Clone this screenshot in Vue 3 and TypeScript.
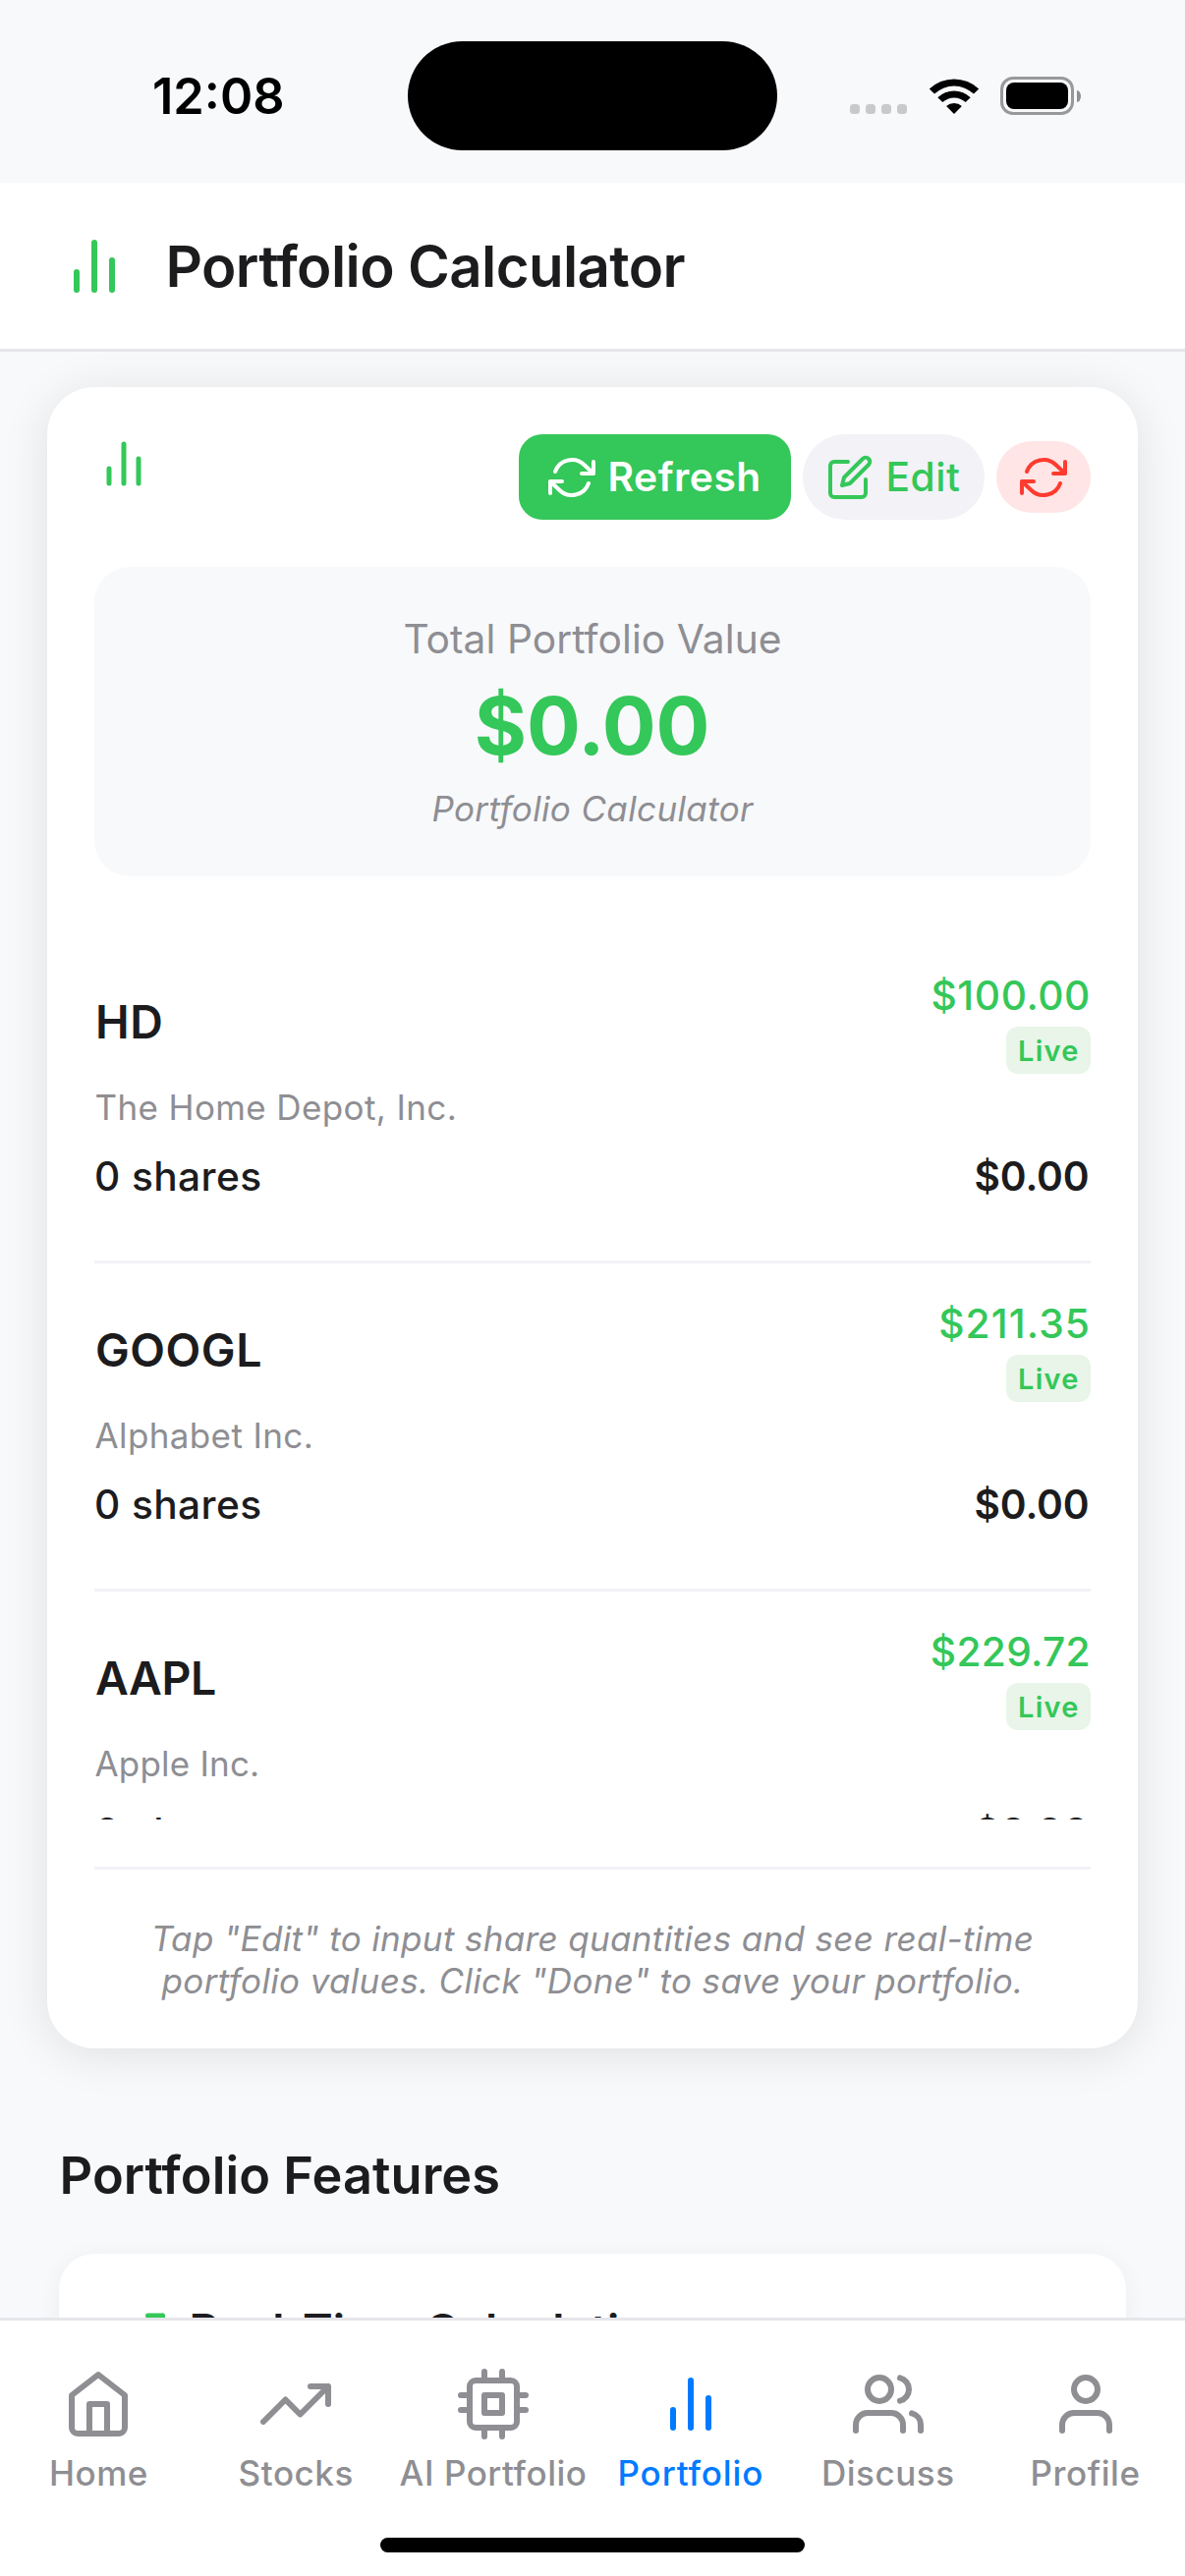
<script setup lang="ts">
interface Stock {
  symbol: string
  name: string
  price: string
  shares: number
  value: string
}

interface Tab {
  label: string
  paths: string[]
  active?: boolean
}

const stocks: Stock[] = [
  { symbol: 'HD', name: 'The Home Depot, Inc.', price: '$100.00', shares: 0, value: '$0.00' },
  { symbol: 'GOOGL', name: 'Alphabet Inc.', price: '$211.35', shares: 0, value: '$0.00' },
  { symbol: 'AAPL', name: 'Apple Inc.', price: '$229.72', shares: 0, value: '$0.00' },
]

const bars = 'M18 20V10M12 20V4M6 20v-6'
const trending = 'M23 6l-9.5 9.5-5-5L1 18M17 6h6v6'
const refresh =
  'M23 4v6h-6M1 20v-6h6M3.51 9a9 9 0 0 1 14.85-3.36L23 10M1 14l4.64 4.36A9 9 0 0 0 20.49 15'

const tabs: Tab[] = [
  { label: 'Home', paths: ['M3 9l9-7 9 7v11a2 2 0 0 1-2 2H5a2 2 0 0 1-2-2z', 'M9 22V12h6v10'] },
  { label: 'Stocks', paths: [trending] },
  {
    label: 'AI Portfolio',
    paths: [
      'M6 4h12a2 2 0 0 1 2 2v12a2 2 0 0 1-2 2H6a2 2 0 0 1-2-2V6a2 2 0 0 1 2-2z',
      'M9 9h6v6H9z',
      'M9 1v3M15 1v3M9 20v3M15 20v3M20 9h3M20 14h3M1 9h3M1 14h3',
    ],
  },
  { label: 'Portfolio', paths: [bars], active: true },
  {
    label: 'Discuss',
    paths: [
      'M17 21v-2a4 4 0 0 0-4-4H5a4 4 0 0 0-4 4v2',
      'M9 3a4 4 0 1 1 0 8a4 4 0 1 1 0-8z',
      'M23 21v-2a4 4 0 0 0-3-3.87',
      'M16 3.13a4 4 0 0 1 0 7.75',
    ],
  },
  {
    label: 'Profile',
    paths: ['M20 21v-2a4 4 0 0 0-4-4H8a4 4 0 0 0-4 4v2', 'M12 3a4 4 0 1 1 0 8a4 4 0 1 1 0-8z'],
  },
]
</script>

<template>
  <div class="screen">
    <div class="status">
      <span class="time">12:08</span>
      <div class="island"></div>
      <div class="indicators">
        <div class="dots"><i v-for="n in 4" :key="n"></i></div>
        <svg class="wifi" width="52" height="38" viewBox="0 0 52 38">
          <path d="M0.8 11.6A36.5 36.5 0 0 1 51.2 11.6L46 16.6A28.9 28.9 0 0 0 6 16.6Z" />
          <path d="M9.3 20.2A24.1 24.1 0 0 1 42.7 20.2L37.7 25.1A16.9 16.9 0 0 0 14.3 25.1Z" />
          <path d="M18.1 29A11.6 11.6 0 0 1 33.9 29L26 37Z" />
        </svg>
        <div class="battery">
          <div class="shell"><div class="charge"></div></div>
          <div class="nub"></div>
        </div>
      </div>
    </div>

    <header class="header">
      <svg class="icon" width="72" height="72" viewBox="0 0 24 24"><path :d="bars" /></svg>
      <h1>Portfolio Calculator</h1>
    </header>

    <main class="content">
      <section class="card">
        <div class="toolbar">
          <svg class="icon" width="60" height="60" viewBox="0 0 24 24"><path :d="bars" /></svg>
          <div class="actions">
            <button class="btn btn-refresh">
              <svg class="icon" width="48" height="48" viewBox="0 0 24 24"><path :d="refresh" /></svg>
              <span>Refresh</span>
            </button>
            <button class="btn btn-edit">
              <svg class="icon" width="48" height="48" viewBox="0 0 24 24">
                <path d="M11 4H4a2 2 0 0 0-2 2v14a2 2 0 0 0 2 2h14a2 2 0 0 0 2-2v-7" />
                <path d="M18.5 2.5a2.121 2.121 0 0 1 3 3L12 15l-4 1 1-4 9.5-9.5z" />
              </svg>
              <span>Edit</span>
            </button>
            <button class="btn btn-reset">
              <svg class="icon" width="48" height="48" viewBox="0 0 24 24"><path :d="refresh" /></svg>
            </button>
          </div>
        </div>

        <div class="summary">
          <div class="summary-label">Total Portfolio Value</div>
          <div class="summary-value">$0.00</div>
          <div class="summary-note">Portfolio Calculator</div>
        </div>

        <div class="list">
          <article v-for="s in stocks" :key="s.symbol" class="stock">
            <div class="stock-top">
              <span class="symbol">{{ s.symbol }}</span>
              <div class="quote">
                <span class="price">{{ s.price }}</span>
                <span class="live">Live</span>
              </div>
            </div>
            <div class="name">{{ s.name }}</div>
            <div class="holding">
              <span class="shares">{{ s.shares }} shares</span>
              <span class="value">{{ s.value }}</span>
            </div>
          </article>
        </div>

        <p class="hint">
          Tap "Edit" to input share quantities and see real-time<br />
          portfolio values. Click "Done" to save your portfolio.
        </p>
      </section>

      <h2>Portfolio Features</h2>
      <section class="feature">
        <svg class="icon" width="60" height="60" viewBox="0 0 24 24"><path :d="trending" /></svg>
        <span>Real-Time Calculations</span>
      </section>
    </main>

    <nav class="tabbar">
      <div class="tabs">
        <a v-for="t in tabs" :key="t.label" class="tab" :class="{ active: t.active }">
          <svg class="icon" width="72" height="72" viewBox="0 0 24 24">
            <path v-for="p in t.paths" :key="p" :d="p" />
          </svg>
          <span>{{ t.label }}</span>
        </a>
      </div>
      <div class="home-indicator"></div>
    </nav>
  </div>
</template>

<style>
body {
  margin: 0;
  background: #f8f9fb;
}
</style>

<style scoped>
.screen {
  width: 1206px;
  height: 2622px;
  overflow: hidden;
  display: flex;
  flex-direction: column;
  background: #f8f9fb;
  color: #1c1c1e;
  font-family: Inter, 'Liberation Sans', sans-serif;
  white-space: nowrap;
}

.icon {
  display: block;
  flex: none;
  fill: none;
  stroke: currentColor;
  stroke-width: 2;
  stroke-linecap: round;
  stroke-linejoin: round;
}

/* Status bar */
.status {
  flex: none;
  height: 186px;
  display: grid;
  grid-template-columns: 415px 376px 415px;
}
.time {
  margin: 68px 0 0 155px;
  font-size: 50.5px;
  line-height: 60px;
  font-weight: 600;
  letter-spacing: 0;
  color: #000;
}
.island {
  margin-top: 41.5px;
  height: 111px;
  border-radius: 56px;
  background: #000;
}
.indicators {
  display: flex;
  align-items: flex-start;
  margin: 78px 0 0 74px;
}
.dots {
  display: flex;
  gap: 6px;
  margin-top: 28px;
}
.dots i {
  width: 10px;
  height: 10px;
  border-radius: 3.5px;
  background: #c8c9cb;
}
.wifi {
  display: block;
  margin: 1px 0 0 21.5px;
}
.battery {
  display: flex;
  align-items: center;
  gap: 3px;
  margin-left: 21.5px;
}
.shell {
  box-sizing: border-box;
  width: 75px;
  height: 39px;
  padding: 3px;
  border: 3px solid #98999a;
  border-radius: 13px;
}
.charge {
  height: 27px;
  border-radius: 8px;
  background: #000;
}
.nub {
  width: 4px;
  height: 12px;
  border-radius: 0 4px 4px 0 / 0 6px 6px 0;
  background: #8f9091;
}

/* Header */
.header {
  flex: none;
  height: 169px;
  display: flex;
  align-items: center;
  gap: 36.5px;
  padding-left: 60px;
  background: #fff;
  border-bottom: 3px solid #e5e5ea;
}
.header .icon,
.toolbar > .icon,
.feature .icon {
  color: #34c759;
}
h1 {
  margin: 0;
  font-size: 58.2px;
  line-height: 72px;
  font-weight: 600;
  letter-spacing: -0.62px;
}

/* Scroll area */
.content {
  flex: 1;
  min-height: 0;
  overflow: hidden;
}
.card {
  margin: 36px 48px 0;
  padding: 48px 48px 47px;
  border-radius: 48px;
  background: #fff;
  box-shadow: 0 6px 48px rgba(0, 0, 0, 0.1);
}
.toolbar {
  display: flex;
  justify-content: space-between;
  align-items: flex-start;
}
.actions {
  display: flex;
  align-items: center;
  gap: 12px;
}
.btn {
  box-sizing: border-box;
  display: flex;
  align-items: center;
  gap: 12.5px;
  height: 87px;
  margin: 0;
  border: 0;
  font: 600 40.7px/50px Inter, 'Liberation Sans', sans-serif;
  letter-spacing: 0.55px;
}
.btn-refresh {
  width: 277px;
  padding: 0 0 0 30px;
  border-radius: 24px;
  background: #34c759;
  color: #fff;
}
.btn-edit {
  width: 185px;
  padding: 0 0 0 24px;
  border-radius: 44px;
  background: #f2f2f7;
  color: #34c759;
  font-weight: 500;
}
.btn-reset {
  width: 96px;
  height: 73px;
  padding: 0 0 0 24px;
  border-radius: 36px;
  background: #ffe5e5;
  color: #ff3b30;
}

.summary {
  margin-top: 48px;
  padding: 49px 0 47px;
  border-radius: 36px;
  background: #f8f9fb;
  text-align: center;
}
.summary-label {
  font-size: 40.7px;
  line-height: 50px;
  letter-spacing: 0.06px;
  color: #8e8e93;
}
.summary-value {
  margin: 13px 0;
  padding-right: 1px;
  font-size: 81.4px;
  line-height: 100px;
  font-weight: 700;
  letter-spacing: -0.2px;
  color: #34c759;
}
.summary-note {
  font-size: 35px;
  line-height: 43px;
  font-style: italic;
  letter-spacing: 0.36px;
  color: #8e8e93;
}

.list {
  height: 900px;
  margin-top: 60px;
  overflow: hidden;
}
.stock {
  padding: 37px 0 60px;
  border-bottom: 3px solid #f2f2f7;
}
.stock-top,
.holding {
  display: flex;
  justify-content: space-between;
  align-items: center;
}
.symbol {
  padding: 0 0 2px 1px;
  font-size: 46.5px;
  line-height: 58px;
  font-weight: 600;
  letter-spacing: 0.5px;
}
.stock:nth-child(3) .symbol {
  letter-spacing: -0.45px;
}
.quote {
  display: flex;
  flex-direction: column;
  align-items: flex-end;
  gap: 6px;
}
.price {
  font-size: 40.7px;
  line-height: 50px;
  font-weight: 500;
  letter-spacing: 0.6px;
  color: #34c759;
}
.stock:nth-child(2) .price {
  letter-spacing: 1.1px;
}
.stock:nth-child(3) .price {
  letter-spacing: 0.33px;
}
.live {
  box-sizing: border-box;
  width: 86px;
  height: 48px;
  padding-left: 12px;
  border-radius: 12px;
  background: #e8f5e8;
  color: #34c759;
  font-size: 29px;
  line-height: 49px;
  font-weight: 600;
  letter-spacing: 1.24px;
}
.name {
  margin: 13px 0 24px;
  padding-left: 0.5px;
  font-size: 35px;
  line-height: 43px;
  letter-spacing: 0.38px;
  color: #8e8e93;
}
.stock:nth-child(3) .name {
  letter-spacing: 0.2px;
}
.holding {
  font-size: 40.7px;
  line-height: 50px;
}
.shares {
  font-weight: 500;
  letter-spacing: 0.4px;
}
.value {
  padding-right: 1.5px;
  font-weight: 600;
  letter-spacing: -0.15px;
}

.hint {
  margin: 48px 0 0;
  padding-top: 49px;
  border-top: 3px solid #f2f2f7;
  font-size: 35px;
  line-height: 43px;
  font-style: italic;
  letter-spacing: 0.34px;
  text-align: center;
  color: #8e8e93;
}

h2 {
  margin: 97px 0 48px 60.5px;
  font-size: 52.3px;
  line-height: 64px;
  font-weight: 600;
  letter-spacing: 0.07px;
}
.feature {
  display: flex;
  align-items: center;
  gap: 24.5px;
  height: 60px;
  margin: 0 60px;
  padding: 48px 48px 120px;
  border-radius: 36px;
  background: #fff;
  box-shadow: 0 3px 24px rgba(0, 0, 0, 0.05);
  font-size: 46.5px;
  line-height: 58px;
  font-weight: 600;
  letter-spacing: 0.16px;
}

/* Tab bar */
.tabbar {
  flex: none;
  box-sizing: border-box;
  height: 263px;
  border-top: 3px solid #e5e5ea;
  background: #fff;
}
.tabs {
  display: grid;
  grid-template-columns: repeat(6, 1fr);
  padding: 49px 1px 0 0;
}
.tab {
  display: flex;
  flex-direction: column;
  align-items: center;
  gap: 13px;
  color: #8e8e93;
  font-size: 35px;
  line-height: 43px;
  font-weight: 500;
  letter-spacing: 0.55px;
}
.tab.active {
  color: #007aff;
  font-weight: 550;
  letter-spacing: 0.9px;
}
.home-indicator {
  width: 432px;
  height: 15px;
  margin: 44px auto 0;
  border-radius: 8px;
  background: #000;
}
</style>
